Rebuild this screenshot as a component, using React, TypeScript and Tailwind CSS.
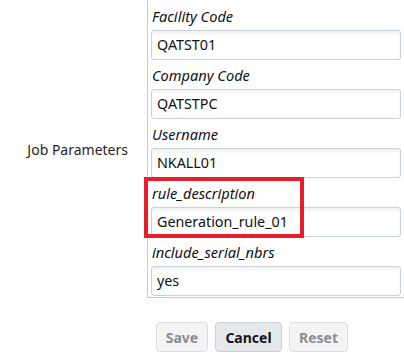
const fields = [
  { label: "Facility Code", value: "QATST01" },
  { label: "Company Code", value: "QATSTPC" },
  { label: "Username", value: "NKALL01" },
  { label: "rule_description", value: "Generation_rule_01" },
  { label: "include_serial_nbrs", value: "yes" },
];

export default function App() {
  return (
    <div className="relative w-[404px] h-[355px] overflow-hidden bg-white text-[#161513] font-['Noto_Sans',sans-serif]">
      <div className="flex">
        <div className="w-[147px] flex items-center justify-end pr-[19px] text-[14px] text-[#1f1f1f]">
          Job Parameters
        </div>
        <div className="flex-1 border-l border-b border-[#c9c9c9] pl-[3px] pr-[3px] pb-[1px] pt-[1px]">
          {fields.map((f) => (
            <div key={f.label}>
              <div className="h-[29px] flex items-end pb-[2px] pl-[1px] text-[14.6px] italic text-[#111]">
                {f.label}
              </div>
              <div className="h-[30px] flex items-center pl-[5px] rounded-[3px] border border-[#c9d1d8] bg-white shadow-[inset_0_3px_3px_rgba(0,0,0,0.05)] text-[14.3px] text-[#111]">
                {f.value}
              </div>
            </div>
          ))}
        </div>
      </div>

      <div className="flex gap-[7px] pl-[156px] mt-[24px]">
        <button className="w-[52px] h-[30px] rounded-[4px] border border-[#dadee3] bg-[#f3f4f6] text-[14px] font-bold text-[#8a8d91]">
          Save
        </button>
        <button className="w-[67px] h-[30px] rounded-[4px] border border-[#c8d0d8] bg-[#e5e9ed] text-[14px] font-bold text-[#161513]">
          Cancel
        </button>
        <button className="w-[59px] h-[30px] rounded-[4px] border border-[#dadee3] bg-[#f3f4f6] text-[14px] font-bold text-[#8a8d91]">
          Reset
        </button>
      </div>

      {/* red highlight around rule_description */}
      <div className="absolute left-[144px] top-[177px] w-[160px] h-[61px] border-4 border-[#e81f2a]" />
    </div>
  );
}
